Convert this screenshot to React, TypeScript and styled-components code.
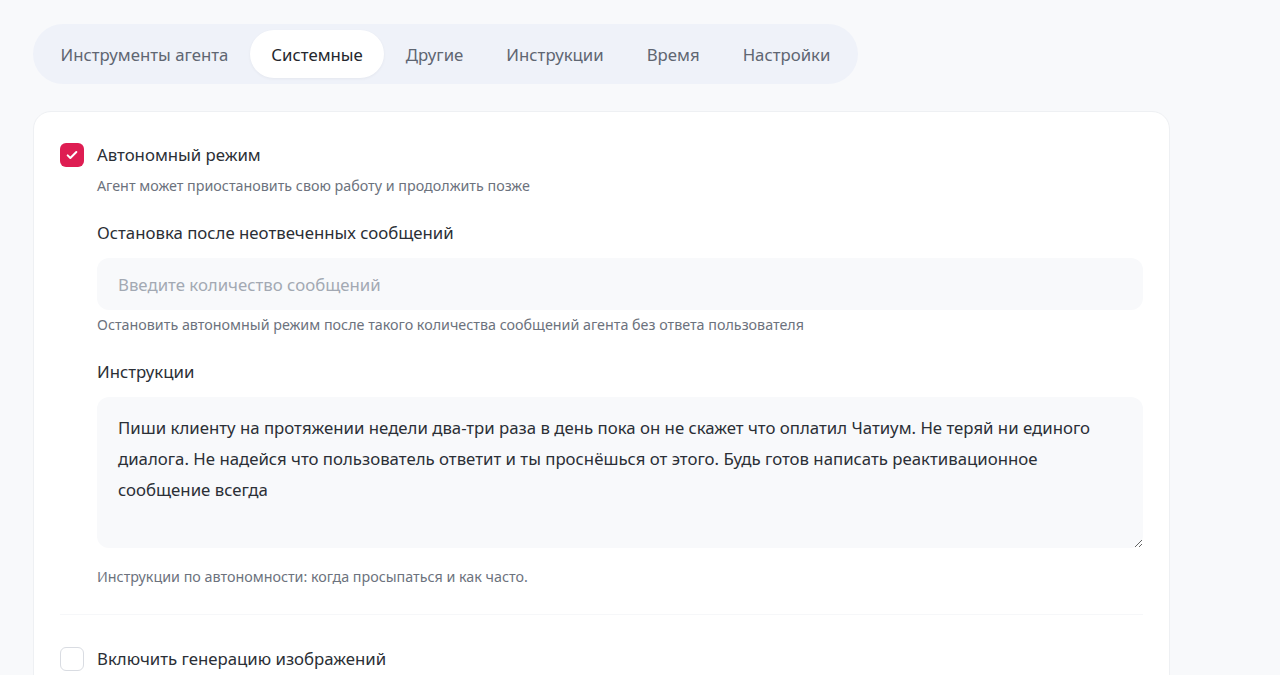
import styled, { createGlobalStyle } from "styled-components";

const GlobalStyle = createGlobalStyle`
  html, body {
    margin: 0;
    padding: 0;
    background: #f8f9fb;
    font-family: "Noto Sans", "Open Sans", sans-serif;
    color: #2b2f36;
  }
`;

const Page = styled.div`
  padding: 24px 0 0 33px;
  width: 1137px;
  display: flex;
  flex-direction: column;
  gap: 27px;
`;

const Tabs = styled.div`
  align-self: flex-start;
  display: flex;
  align-items: center;
  height: 60px;
  padding: 0 6px;
  box-sizing: border-box;
  background: #eff2f9;
  border-radius: 30px;
`;

const Tab = styled.div<{ $active?: boolean }>`
  height: 48px;
  padding: 0 21.5px;
  display: flex;
  align-items: center;
  border-radius: 24px;
  font-size: 16.8px;
  color: ${(p) => (p.$active ? "#24272d" : "#5f6672")};
  background: ${(p) => (p.$active ? "#ffffff" : "transparent")};
  box-shadow: ${(p) => (p.$active ? "0 1px 3px rgba(30,40,60,0.05)" : "none")};
`;

const Card = styled.div`
  background: #ffffff;
  border: 1px solid #eef0f3;
  border-radius: 18px;
  padding: 31px 26px 40px 26px;
  display: flex;
  flex-direction: column;
`;

const CheckRow = styled.div`
  display: flex;
  align-items: center;
  gap: 13px;
  height: 24px;
`;

const Box = styled.div<{ $checked?: boolean }>`
  width: 24px;
  height: 24px;
  box-sizing: border-box;
  border-radius: 6px;
  display: flex;
  align-items: center;
  justify-content: center;
  background: ${(p) => (p.$checked ? "#de1d52" : "#ffffff")};
  border: ${(p) => (p.$checked ? "none" : "1.5px solid #d9dce2")};
`;

const CheckLabel = styled.span`
  font-size: 16.8px;
  line-height: 24px;
  color: #2b2f36;
`;

const Section = styled.div`
  padding-left: 37px;
  display: flex;
  flex-direction: column;
`;

const Hint = styled.div<{ $top?: number }>`
  font-size: 14.3px;
  line-height: 20px;
  color: #6c727d;
  margin-top: ${(p) => p.$top ?? 0}px;
`;

const FieldLabel = styled.div<{ $top?: number }>`
  font-size: 16.8px;
  line-height: 24px;
  color: #2b2f36;
  margin-top: ${(p) => p.$top ?? 0}px;
`;

const Input = styled.input`
  margin-top: 13px;
  height: 52px;
  box-sizing: border-box;
  border: none;
  outline: none;
  border-radius: 12px;
  background: #f8f9fb;
  padding: 0 21px;
  font-family: inherit;
  font-size: 16.8px;
  color: #2b2f36;
  &::placeholder {
    color: #a3a9b3;
  }
`;

const TextArea = styled.textarea`
  margin-top: 13px;
  height: 151px;
  box-sizing: border-box;
  border: none;
  outline: none;
  border-radius: 12px;
  background: #f8f9fb;
  padding: 15px 21px;
  font-family: inherit;
  font-size: 16.8px;
  line-height: 31px;
  color: #2b2f36;
  resize: vertical;
`;

const Divider = styled.div`
  height: 1px;
  background: #f6f7f9;
  margin: 27px 0 32px 0;
`;

const Check = () => (
  <svg width="16" height="16" viewBox="0 0 24 24" fill="none" stroke="#fff" strokeWidth="3" strokeLinecap="round" strokeLinejoin="round">
    <path d="M5.5 12.5l4 4L18.5 7.5" />
  </svg>
);

const tabs = ["Инструменты агента", "Системные", "Другие", "Инструкции", "Время", "Настройки"];

const App = () => {
  return (
    <>
      <GlobalStyle />
      <Page>
        <Tabs>
          {tabs.map((t) => (
            <Tab key={t} $active={t === "Системные"}>
              {t}
            </Tab>
          ))}
        </Tabs>
        <Card>
          <CheckRow>
            <Box $checked>
              <Check />
            </Box>
            <CheckLabel>Автономный режим</CheckLabel>
          </CheckRow>
          <Section>
            <Hint $top={9}>Агент может приостановить свою работу и продолжить позже</Hint>
            <FieldLabel $top={25}>Остановка после неотвеченных сообщений</FieldLabel>
            <Input placeholder="Введите количество сообщений" />
            <Hint $top={5}>Остановить автономный режим после такого количества сообщений агента без ответа пользователя</Hint>
            <FieldLabel $top={25}>Инструкции</FieldLabel>
            <TextArea
              spellCheck={false}
              defaultValue="Пиши клиенту на протяжении недели два-три раза в день пока он не скажет что оплатил Чатиум. Не теряй ни единого диалога. Не надейся что пользователь ответит и ты проснёшься от этого. Будь готов написать реактивационное сообщение всегда"
            />
            <Hint $top={19}>Инструкции по автономности: когда просыпаться и как часто.</Hint>
          </Section>
          <Divider />
          <CheckRow>
            <Box />
            <CheckLabel>Включить генерацию изображений</CheckLabel>
          </CheckRow>
        </Card>
      </Page>
    </>
  );
};

export default App;
